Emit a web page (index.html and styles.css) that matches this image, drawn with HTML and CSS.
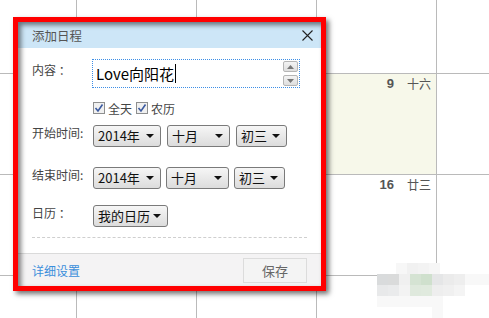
FILE: index.html
```html
<!DOCTYPE html>
<html>
<head>
<meta charset="utf-8">
<link rel="stylesheet" href="styles.css">
</head>
<body>
<div class="cal">
  <div class="cell"></div><div class="cell"></div><div class="cell"></div><div class="cell"></div><div class="cell"></div>
  <div class="cell"></div><div class="cell"></div><div class="cell"></div><div class="cell today"><span class="num">9</span><span class="lunar">十六</span></div><div class="cell"></div>
  <div class="cell"></div><div class="cell"></div><div class="cell"></div><div class="cell"><span class="num">16</span><span class="lunar">廿三</span></div><div class="cell"></div>
  <div class="cell"></div><div class="cell"></div><div class="cell"></div><div class="cell"></div><div class="cell"></div>
</div>

<div class="mosaic">
  <div class="m" style="left:396px;top:263px;background:#f7f7f7"></div>
  <div class="m" style="left:407px;top:263px;background:#f1f1f1"></div>
  <div class="m" style="left:418px;top:263px;background:#f3f3f3"></div>
  <div class="m" style="left:429px;top:263px;background:#f6f6f6"></div>
  <div class="m" style="left:377px;top:274px;background:#d9dbdc"></div>
  <div class="m" style="left:388px;top:274px;background:#dadbdb"></div>
  <div class="m" style="left:399px;top:274px;background:#f0f0f0"></div>
  <div class="m" style="left:410px;top:274px;background:#d5e3d3"></div>
  <div class="m" style="left:421px;top:274px;background:#cfe0cd"></div>
  <div class="m" style="left:432px;top:274px;background:#e5e6e7"></div>
  <div class="m" style="left:443px;top:274px;background:#ebebeb"></div>
  <div class="m" style="left:454px;top:274px;background:#eeeeee"></div>
  <div class="m wide" style="left:465px;top:274px;background:#f8f8f8"></div>
  <div class="m" style="left:377px;top:285px;background:#e8e9ea"></div>
  <div class="m" style="left:388px;top:285px;background:#eaebec"></div>
  <div class="m" style="left:399px;top:285px;background:#f3f3f3"></div>
  <div class="m" style="left:410px;top:285px;background:#dfe9dd"></div>
  <div class="m" style="left:421px;top:285px;background:#e0eade"></div>
  <div class="m" style="left:432px;top:285px;background:#eeeeee"></div>
  <div class="m" style="left:443px;top:285px;background:#f0f0f0"></div>
  <div class="m" style="left:454px;top:285px;background:#f4f4f4"></div>
  <div class="m" style="left:377px;top:296px;background:#f8f8f8;width:66px"></div>
  <div class="m" style="left:432px;top:307px;background:#f8f8f8"></div>
</div>

<div class="dialog">
  <div class="inner">
    <div class="title">
      <span>添加日程</span>
      <svg class="close" width="11" height="11" viewBox="0 0 11 11"><path d="M0.5 0.5L10.5 10.5M10.5 0.5L0.5 10.5" stroke="#222" stroke-width="1.1"/></svg>
    </div>
    <div class="body">
      <div class="row">
        <div class="label">内容 ：</div>
        <div class="textbox">
          <span class="txt">Love向阳花</span><span class="caret"></span>
          <div class="spin">
            <div class="sbtn"><svg width="7" height="4" viewBox="0 0 7 4"><path d="M0 4L3.5 0L7 4Z" fill="#777"/></svg></div>
            <div class="sbtn"><svg width="7" height="4" viewBox="0 0 7 4"><path d="M0 0L7 0L3.5 4Z" fill="#777"/></svg></div>
          </div>
        </div>
      </div>
      <div class="checks">
        <label class="chk"><svg width="12" height="12" viewBox="0 0 12 12"><rect x="0.5" y="0.5" width="11" height="11" fill="#f0f0f0" stroke="#8e8f8f"/><path d="M2.5 6L5 9L9.5 2.5" fill="none" stroke="#3b5aa0" stroke-width="1.6"/></svg>全天</label>
        <label class="chk"><svg width="12" height="12" viewBox="0 0 12 12"><rect x="0.5" y="0.5" width="11" height="11" fill="#f0f0f0" stroke="#8e8f8f"/><path d="M2.5 6L5 9L9.5 2.5" fill="none" stroke="#3b5aa0" stroke-width="1.6"/></svg>农历</label>
      </div>
      <div class="row sel-row start">
        <div class="label">开始时间:</div>
        <div class="selects g6">
          <div class="sel w68"><span>2014年</span><i class="arr"></i></div>
          <div class="sel w63"><span>十月</span><i class="arr"></i></div>
          <div class="sel w51"><span>初三</span><i class="arr"></i></div>
        </div>
      </div>
      <div class="row sel-row end">
        <div class="label">结束时间:</div>
        <div class="selects g5">
          <div class="sel w68"><span>2014年</span><i class="arr"></i></div>
          <div class="sel w63"><span>十月</span><i class="arr"></i></div>
          <div class="sel w51"><span>初三</span><i class="arr"></i></div>
        </div>
      </div>
      <div class="row sel-row calrow">
        <div class="label">日历 ：</div>
        <div class="selects">
          <div class="sel w75"><span>我的日历</span><i class="arr"></i></div>
        </div>
      </div>
      <div class="dash"></div>
    </div>
    <div class="footer">
      <a class="more">详细设置</a>
      <div class="save">保存</div>
    </div>
  </div>
</div>
</body>
</html>
```
FILE: styles.css
```css
html, body {
  margin: 0;
  padding: 0;
}
body {
  width: 489px;
  height: 318px;
  overflow: hidden;
  position: relative;
  background: #fff;
  font-family: "Noto Sans CJK SC", "Microsoft YaHei", sans-serif;
}
.cal {
  display: grid;
  grid-template-columns: 77px 120px 120px 120px 52px;
  grid-template-rows: 74px 101px 101px 42px;
  width: 489px;
  height: 318px;
  overflow: hidden;
}
.cell {
  box-sizing: border-box;
  border-right: 1px solid #bababa;
  border-bottom: 1px solid #bababa;
  display: flex;
  justify-content: flex-end;
  align-items: flex-start;
  padding: 2px 5px 0 0;
  gap: 13px;
  line-height: 16px;
  min-width: 0;
}
.cell:nth-child(5n) {
  border-right: none;
}
.cell:nth-child(n+16) {
  border-bottom: none;
}
.cell.today {
  background: #f7f8ea;
}
.num {
  font-family: "Liberation Sans", Arial, sans-serif;
  font-weight: bold;
  font-size: 13px;
  color: #555;
}
.lunar {
  font-size: 12px;
  color: #555;
}
.mosaic .m {
  position: absolute;
  width: 11px;
  height: 11px;
}
.mosaic .m.wide {
  width: 24px;
}
.dialog {
  position: absolute;
  left: 13px;
  top: 17px;
  width: 313px;
  height: 274px;
  box-sizing: border-box;
  border: 5px solid #ff0000;
  box-shadow: 3px 3px 5px rgba(0, 0, 0, 0.55);
  background: #fff;
}
.inner {
  width: 303px;
  height: 264px;
  display: flex;
  flex-direction: column;
  position: relative;
}
.inner::after {
  content: "";
  position: absolute;
  inset: 0;
  box-shadow: inset 3px 3px 5px rgba(0, 0, 0, 0.5);
  pointer-events: none;
}
.title {
  height: 26px;
  background: #cde6f7;
  display: flex;
  align-items: center;
  justify-content: space-between;
  padding: 0 8px 0 14px;
  font-size: 12.5px;
  color: #555;
}
.close {
  display: block;
}
.body {
  padding: 11px 14px 0 14px;
  display: flex;
  flex-direction: column;
}
.row {
  display: flex;
  align-items: flex-start;
}
.label {
  width: 60px;
  font-size: 12px;
  color: #444;
  line-height: 15px;
  padding-top: 3px;
  white-space: nowrap;
}
.sel-row .label {
  padding-top: 0;
}
.textbox {
  box-sizing: border-box;
  width: 208px;
  height: 29px;
  border: 1px dotted #3d8ee6;
  display: flex;
  align-items: center;
  padding-left: 3px;
  position: relative;
}
.txt {
  font-size: 15px;
  color: #000;
  font-family: "Noto Sans CJK SC", sans-serif;
  line-height: 20px;
}
.caret {
  width: 1px;
  height: 19px;
  background: #000;
  margin-left: 1px;
}
.spin {
  margin-left: auto;
  margin-right: 1px;
  display: flex;
  flex-direction: column;
  gap: 3px;
}
.sbtn {
  box-sizing: border-box;
  width: 15px;
  height: 11px;
  border: 1px solid #b5b5b5;
  border-radius: 2px;
  background: linear-gradient(#f4f4f4, #dedede);
  display: flex;
  align-items: center;
  justify-content: center;
}
.checks {
  display: flex;
  gap: 4px;
  margin: 12px 0 0 61px;
  height: 16px;
  align-items: center;
}
.chk {
  display: flex;
  align-items: center;
  gap: 3px;
  font-size: 12px;
  color: #444;
}
.chk svg {
  display: block;
}
.start {
  margin-top: 9px;
}
.end {
  margin-top: 20px;
}
.calrow {
  margin-top: 16px;
}
.selects {
  display: flex;
  margin-left: 1px;
}
.g6 {
  gap: 6px;
}
.g5 {
  gap: 5px;
}
.sel {
  box-sizing: border-box;
  height: 22px;
  border: 1px solid #7a7a7a;
  border-radius: 3px;
  background: linear-gradient(#f6f6f6, #dcdcdc);
  display: flex;
  align-items: center;
  padding: 0 6px 0 4px;
  font-size: 13px;
  color: #111;
}
.sel span {
  flex: 1;
  line-height: 18px;
  white-space: nowrap;
}
.arr {
  flex: none;
  width: 0;
  height: 0;
  border-left: 4px solid transparent;
  border-right: 4px solid transparent;
  border-top: 4px solid #111;
}
.w68 { width: 68px; }
.w63 { width: 63px; }
.w51 { width: 51px; }
.w75 { width: 75px; }
.dash {
  margin-top: 10px;
  border-top: 1px dashed #cfcfcf;
}
.footer {
  margin-top: auto;
  height: 33px;
  box-sizing: border-box;
  border-top: 1px solid #dadada;
  background: #f4f3f4;
  display: flex;
  align-items: center;
  justify-content: space-between;
  padding: 0 14px 0 14px;
}
.more {
  font-size: 12px;
  color: #3a8edb;
}
.save {
  box-sizing: border-box;
  width: 64px;
  height: 25px;
  border: 1px solid #dcdcdc;
  background: #f4f4f4;
  font-size: 13px;
  color: #666;
  display: flex;
  align-items: center;
  justify-content: center;
}
```
